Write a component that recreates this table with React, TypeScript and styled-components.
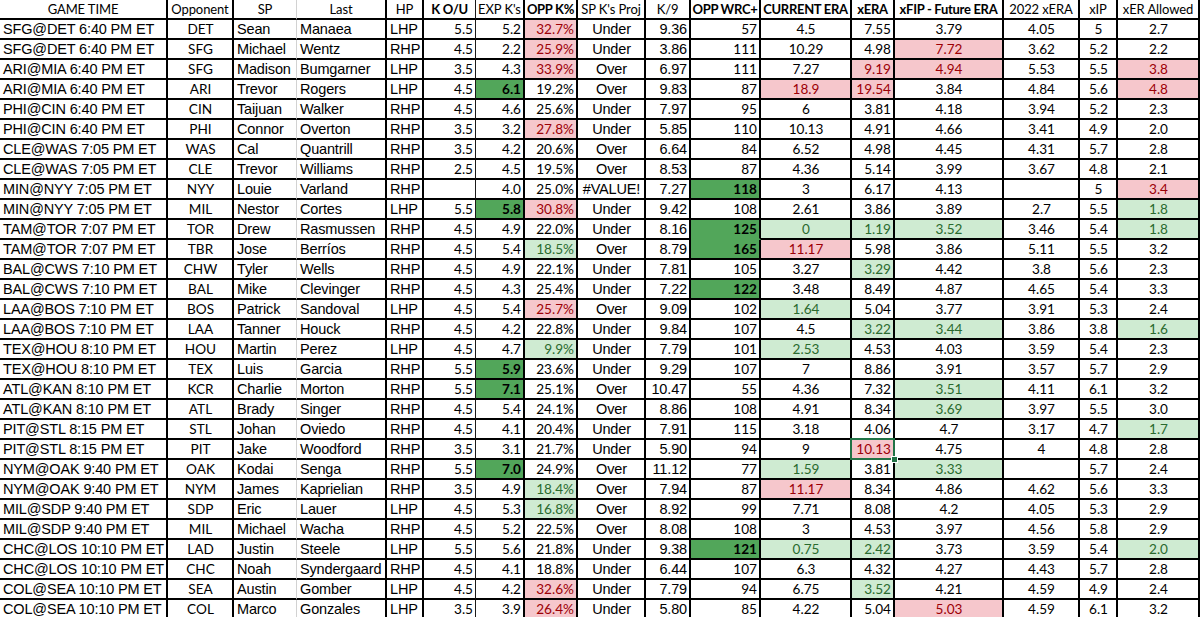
import React from 'react';
import styled, { createGlobalStyle, css } from 'styled-components';

type Align = 'left' | 'center' | 'right';
type FontKind = 'a' | 'c';
type Fill = '' | 'r' | 'g' | 'd' | 'D' | 's';
type RightBorder = 'thick' | 'thin' | 'gray';

interface ColSpec {
  w: number;
  h: string;
  f: FontKind;
  al: Align;
  hb?: boolean;
  rb?: RightBorder;
}

const COLS: ColSpec[] = [
  { w: 168, h: 'GAME TIME', f: 'a', al: 'left' },
  { w: 66, h: 'Opponent', f: 'c', al: 'center' },
  { w: 63, h: 'SP', f: 'a', al: 'left', rb: 'gray' },
  { w: 90, h: 'Last', f: 'a', al: 'left' },
  { w: 37, h: 'HP', f: 'a', al: 'left' },
  { w: 52, h: 'K O/U', f: 'c', al: 'right', hb: true, rb: 'thin' },
  { w: 49, h: "EXP K's", f: 'c', al: 'right' },
  { w: 53, h: 'OPP K%', f: 'c', al: 'right', hb: true },
  { w: 68, h: "SP K's Proj", f: 'a', al: 'center' },
  { w: 45, h: 'K/9', f: 'a', al: 'right' },
  { w: 70, h: 'OPP WRC+', f: 'c', al: 'right', hb: true },
  { w: 91, h: 'CURRENT ERA', f: 'c', al: 'center', hb: true },
  { w: 43, h: 'xERA', f: 'c', al: 'right', hb: true },
  { w: 109, h: 'xFIP - Future ERA', f: 'c', al: 'center', hb: true },
  { w: 76, h: '2022 xERA', f: 'c', al: 'center' },
  { w: 38, h: 'xIP', f: 'c', al: 'center' },
  { w: 82, h: 'xER Allowed', f: 'c', al: 'center' },
];

const RAW: string[] = [
  'SFG@DET 6:40 PM ET|DET|Sean|Manaea|LHP|5.5|5.2|32.7%^r|Under|9.36|57|4.5|7.55|3.79|4.05|5|2.7',
  'SFG@DET 6:40 PM ET|SFG|Michael|Wentz|RHP|4.5|2.2|25.9%^r|Under|3.86|111|10.29|4.98|7.72^r|3.62|5.2|2.2',
  'ARI@MIA 6:40 PM ET|SFG|Madison|Bumgarner|LHP|3.5|4.3|33.9%^r|Over|6.97|111|7.27|9.19^r|4.94^r|5.53|5.5|3.8^r',
  'ARI@MIA 6:40 PM ET|ARI|Trevor|Rogers|LHP|4.5|6.1^d|19.2%|Over|9.83|87|18.9^r|19.54^r|3.84|4.84|5.6|4.8^r',
  'PHI@CIN 6:40 PM ET|CIN|Taijuan|Walker|RHP|4.5|4.6|25.6%|Under|7.97|95|6|3.81|4.18|3.94|5.2|2.3',
  'PHI@CIN 6:40 PM ET|PHI|Connor|Overton|RHP|3.5|3.2|27.8%^r|Under|5.85|110|10.13|4.91|4.66|3.41|4.9|2.0',
  'CLE@WAS 7:05 PM ET|WAS|Cal|Quantrill|RHP|3.5|4.2|20.6%|Over|6.64|84|6.52|4.98|4.45|4.31|5.7|2.8',
  'CLE@WAS 7:05 PM ET|CLE|Trevor|Williams|RHP|2.5|4.5|19.5%|Over|8.53|87|4.36|5.14|3.99|3.67|4.8|2.1',
  'MIN@NYY 7:05 PM ET|NYY|Louie|Varland|RHP||4.0|25.0%|#VALUE!|7.27|118^d|3|6.17|4.13||5|3.4^r',
  'MIN@NYY 7:05 PM ET|MIL|Nestor|Cortes|LHP|5.5|5.8^d|30.8%^r|Under|9.42|108|2.61|3.86|3.89|2.7|5.5|1.8^g',
  'TAM@TOR 7:07 PM ET|TOR|Drew|Rasmussen|RHP|4.5|4.9|22.0%|Under|8.16|125^D|0^g|1.19^g|3.52^g|3.46|5.4|1.8^g',
  'TAM@TOR 7:07 PM ET|TBR|Jose|Berríos|RHP|4.5|5.4|18.5%^g|Over|8.79|165^d|11.17^r|5.98|3.86|5.11|5.5|3.2',
  'BAL@CWS 7:10 PM ET|CHW|Tyler|Wells|RHP|4.5|4.9|22.1%|Under|7.81|105|3.27|3.29^g|4.42|3.8|5.6|2.3',
  'BAL@CWS 7:10 PM ET|BAL|Mike|Clevinger|RHP|4.5|4.3|25.4%|Under|7.22|122^d|3.48|8.49|4.87|4.65|5.4|3.3',
  'LAA@BOS 7:10 PM ET|BOS|Patrick|Sandoval|LHP|4.5|5.4|25.7%^r|Over|9.09|102|1.64^g|5.04|3.77|3.91|5.3|2.4',
  'LAA@BOS 7:10 PM ET|LAA|Tanner|Houck|RHP|4.5|4.2|22.8%|Under|9.84|107|4.5|3.22^g|3.44^g|3.86|3.8|1.6^g',
  'TEX@HOU 8:10 PM ET|HOU|Martin|Perez|LHP|4.5|4.7|9.9%^g|Under|7.79|101|2.53^g|4.53|4.03|3.59|5.4|2.3',
  'TEX@HOU 8:10 PM ET|TEX|Luis|Garcia|RHP|5.5|5.9^d|23.6%|Under|9.29|107|7|8.86|3.91|3.57|5.7|2.9',
  'ATL@KAN 8:10 PM ET|KCR|Charlie|Morton|RHP|5.5|7.1^d|25.1%|Over|10.47|55|4.36|7.32|3.51^g|4.11|6.1|3.2',
  'ATL@KAN 8:10 PM ET|ATL|Brady|Singer|RHP|4.5|5.4|24.1%|Over|8.86|108|4.91|8.34|3.69^g|3.97|5.5|3.0',
  'PIT@STL 8:15 PM ET|STL|Johan|Oviedo|RHP|4.5|4.1|20.4%|Under|7.91|115|3.18|4.06|4.7|3.17|4.7|1.7^g',
  'PIT@STL 8:15 PM ET|PIT|Jake|Woodford|RHP|3.5|3.1|21.7%|Under|5.90|94|9|10.13^s|4.75|4|4.8|2.8',
  'NYM@OAK 9:40 PM ET|OAK|Kodai|Senga|RHP|5.5|7.0^d|24.9%|Over|11.12|77|1.59^g|3.81|3.33^g||5.7|2.4',
  'NYM@OAK 9:40 PM ET|NYM|James|Kaprielian|RHP|3.5|4.9|18.4%^g|Over|7.94|87|11.17^r|8.34|4.86|4.62|5.6|3.3',
  'MIL@SDP 9:40 PM ET|SDP|Eric|Lauer|LHP|4.5|5.3|16.8%^g|Over|8.92|99|7.71|8.08|4.2|4.05|5.3|2.9',
  'MIL@SDP 9:40 PM ET|MIL|Michael|Wacha|RHP|4.5|5.2|22.5%|Over|8.08|108|3|4.53|3.97|4.56|5.8|2.9',
  'CHC@LOS 10:10 PM ET|LAD|Justin|Steele|LHP|5.5|5.6|21.8%|Under|9.38|121^d|0.75^g|2.42^g|3.73|3.59|5.4|2.0^g',
  'CHC@LOS 10:10 PM ET|CHC|Noah|Syndergaard|RHP|4.5|4.1|18.8%|Under|6.44|107|6.3|4.32|4.27|4.43|5.7|2.8',
  'COL@SEA 10:10 PM ET|SEA|Austin|Gomber|LHP|4.5|4.2|32.6%^r|Under|7.79|94|6.75|3.52^g|4.21|4.59|4.9|2.4',
  'COL@SEA 10:10 PM ET|COL|Marco|Gonzales|LHP|3.5|3.9|26.4%^r|Under|5.80|85|4.22|5.04|5.03^r|4.59|6.1|3.2',
];

const ROWS = RAW.map((line) =>
  line.split('|').map((cell) => {
    const [text, fill] = cell.split('^');
    return { text, fill: (fill || '') as Fill };
  })
);

const FILLS: Record<string, { bg: string; fg: string }> = {
  '': { bg: '#ffffff', fg: '#000000' },
  r: { bg: '#f6c7cc', fg: '#9c0006' },
  s: { bg: '#f6c7cc', fg: '#9c0006' },
  g: { bg: '#cfebd2', fg: '#2a6a2e' },
  d: { bg: '#52a65a', fg: '#000000' },
  D: { bg: '#52a65a', fg: '#000000' },
};

const Global = createGlobalStyle`
  html, body {
    margin: 0;
    padding: 0;
    background: #ffffff;
  }
  body {
    overflow: hidden;
  }
`;

const Sheet = styled.div`
  display: grid;
  grid-template-columns: ${COLS.map((c) => `${c.w}px`).join(' ')};
  grid-auto-rows: 20px;
  width: 1200px;
  background: #ffffff;
`;

const rightBorder = (rb: RightBorder) => {
  if (rb === 'gray') return '1px solid #d2d2d2';
  if (rb === 'thin') return '1px solid #1a1a1a';
  return '2px solid #000000';
};

const fontFor = (f: FontKind) =>
  f === 'a'
    ? css`
        font-family: 'Liberation Sans', Arial, sans-serif;
        font-size: 14.5px;
        letter-spacing: -0.15px;
      `
    : css`
        font-family: Lato, 'Open Sans', sans-serif;
        font-size: 13.6px;
      `;

const Cell = styled.div<{
  $align: Align;
  $font: FontKind;
  $fill: Fill;
  $bold?: boolean;
  $rb: RightBorder;
  $merge?: boolean;
}>`
  box-sizing: border-box;
  position: relative;
  padding: 0 2px 0 3px;
  line-height: 18px;
  white-space: nowrap;
  text-align: ${(p) => p.$align};
  border-right: ${(p) => rightBorder(p.$rb)};
  border-bottom: 2px solid ${(p) => (p.$merge ? FILLS[p.$fill].bg : '#000000')};
  background: ${(p) => FILLS[p.$fill].bg};
  color: ${(p) => FILLS[p.$fill].fg};
  font-weight: ${(p) => (p.$bold ? 700 : 400)};
  ${(p) => fontFor(p.$font)}
  ${(p) =>
    p.$fill === 's' &&
    css`
      &::after {
        content: '';
        position: absolute;
        left: -2px;
        top: -2px;
        right: -2px;
        bottom: -2px;
        border: 2px solid #217346;
        pointer-events: none;
      }
      &::before {
        content: '';
        position: absolute;
        right: -5px;
        bottom: -5px;
        width: 5px;
        height: 5px;
        background: #217346;
        border: 1px solid #ffffff;
        z-index: 2;
      }
    `}
`;

const HeadCell = styled(Cell)`
  font-family: Lato, 'Open Sans', sans-serif;
  font-size: 13px;
  letter-spacing: ${(p) => (p.$bold ? '-0.3px' : '-0.1px')};
  text-align: center;
  padding: 0 1px;
  overflow: hidden;
`;

export default function App() {
  return (
    <>
      <Global />
      <Sheet>
        {COLS.map((c, i) => (
          <HeadCell
            key={`h${i}`}
            $align="center"
            $font="c"
            $fill=""
            $bold={c.hb}
            $rb={c.rb || 'thick'}
          >
            {c.h}
          </HeadCell>
        ))}
        {ROWS.map((row, r) =>
          row.map((cell, i) => {
            const col = COLS[i];
            const dark = cell.fill === 'd' || cell.fill === 'D';
            return (
              <Cell
                key={`${r}-${i}`}
                $align={col.al}
                $font={col.f}
                $fill={cell.fill}
                $bold={dark}
                $rb={col.rb || 'thick'}
                $merge={cell.fill === 'D'}
              >
                {cell.text}
              </Cell>
            );
          })
        )}
      </Sheet>
    </>
  );
}
